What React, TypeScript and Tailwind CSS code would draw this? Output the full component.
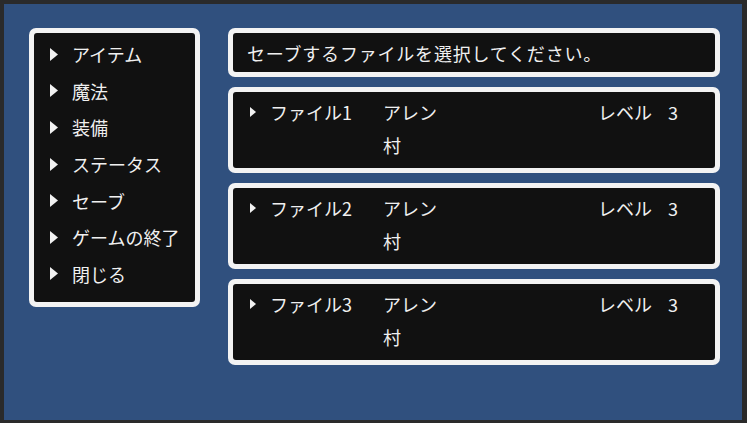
import React from "react";

const menuItems = ["アイテム", "魔法", "装備", "ステータス", "セーブ", "ゲームの終了", "閉じる"];

const files = [
  { label: "ファイル1", name: "アレン", place: "村", level: 3 },
  { label: "ファイル2", name: "アレン", place: "村", level: 3 },
  { label: "ファイル3", name: "アレン", place: "村", level: 3 },
];

function Cursor({ w, h }: { w: number; h: number }) {
  return (
    <svg width={w} height={h} viewBox={`0 0 ${w} ${h}`} className="shrink-0">
      <polygon points={`0,0 ${w},${h / 2} 0,${h}`} fill="#f2f2f2" />
    </svg>
  );
}

function Window({ className, children }: { className?: string; children: React.ReactNode }) {
  return (
    <div className={`rounded-[7px] bg-[#f3f3f3] p-[5px] ${className ?? ""}`}>
      <div className="h-full rounded-[3px] bg-[#111111]">{children}</div>
    </div>
  );
}

export default function App() {
  return (
    <div
      className="h-[423px] w-[747px] bg-[#2a2a2a] pb-[3px] pl-[4px] pr-[5px] pt-[4px] text-[18px] text-[#f0f0f0]"
      style={{ fontFamily: '"Noto Sans CJK JP", "Noto Sans", sans-serif' }}
    >
      <div className="flex h-full gap-[28px] bg-[#30507e] pl-[25px] pt-[24px]">
        <Window className="h-[279px] w-[171px]">
          <ul className="pb-[7px] pl-[16px] pt-[3px]">
            {menuItems.map((item) => (
              <li key={item} className="flex h-[36.6px] items-center gap-[14px] leading-none">
                <Cursor w={8} h={13} />
                <span>{item}</span>
              </li>
            ))}
          </ul>
        </Window>

        <div className="flex w-[492px] flex-col gap-[10px]">
          <Window className="h-[49px]">
            <div className="flex h-full items-center pl-[14px] leading-none tracking-[0.8px]">
              セーブするファイルを選択してください。
            </div>
          </Window>

          {files.map((f) => (
            <Window key={f.label} className="h-[86px]">
              <div className="pl-[17px] pt-[3px] leading-none">
                <div className="flex h-[33px] items-center">
                  <Cursor w={6} h={10} />
                  <span className="ml-[14px] w-[113px]">{f.label}</span>
                  <span className="w-[215px]">{f.name}</span>
                  <span className="w-[70px]">レベル</span>
                  <span>{f.level}</span>
                </div>
                <div className="flex h-[33px] items-center pl-[133px]">{f.place}</div>
              </div>
            </Window>
          ))}
        </div>
      </div>
    </div>
  );
}
